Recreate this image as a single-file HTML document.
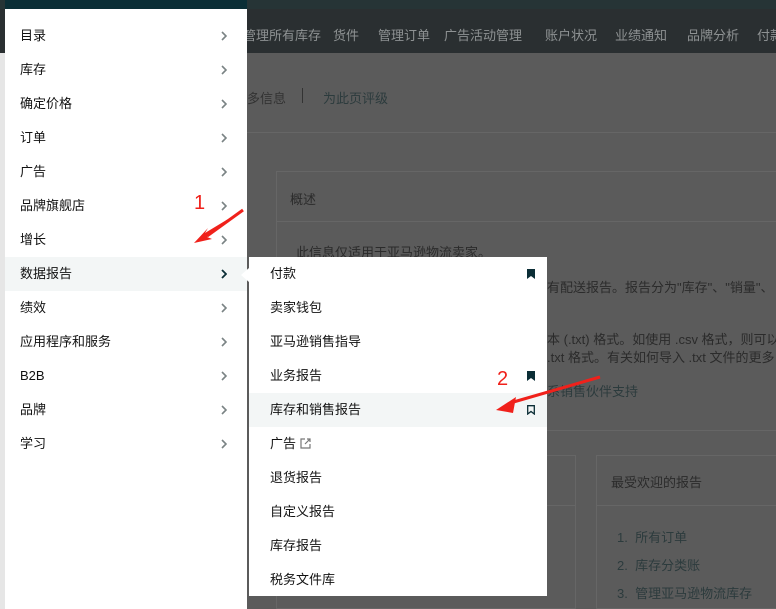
<!DOCTYPE html>
<html><head><meta charset="utf-8"><style>
*{margin:0;padding:0;box-sizing:border-box}
body{width:776px;height:609px;overflow:hidden;background:#5b5b5b;font-family:"Liberation Sans","Noto Sans CJK SC",sans-serif;font-size:13px;position:relative}
.abs{position:absolute}
.nav{left:0;top:0;width:776px;height:53px;background:#2a2f31;border-top:9px solid #263436}
.nav span{position:absolute;top:16px;color:#8e9293;font-size:13px;white-space:nowrap}
.bg{color:#2b2b2b}
.menu{left:5px;top:9px;width:242px;height:600px;background:#fff}
.row{position:absolute;left:0;width:100%;height:34px;line-height:34px;padding-left:15px;color:#111;font-size:13px}
.chev{position:absolute;right:20px;top:12px;width:6px;height:10px}
.sub{left:249px;top:257px;width:298px;height:339px;background:#fff}
.sub .row{padding-left:21px}
.bm{position:absolute;right:12px;top:12px;width:8px;height:10px}
</style></head><body>
<div class="abs" style="left:0;top:0;width:5px;height:609px;background:#e6e6e6"></div>
<div class="abs nav">
<span style="left:243px">管理所有库存</span><span style="left:333px">货件</span><span style="left:378px">管理订单</span><span style="left:444px">广告活动管理</span><span style="left:545px">账户状况</span><span style="left:615px">业绩通知</span><span style="left:687px">品牌分析</span><span style="left:757px">付款</span>
</div>
<div class="abs bg" style="left:247px;top:88px;color:#333">多信息</div>
<div class="abs" style="left:302px;top:88px;width:1px;height:15px;background:#333"></div>
<div class="abs" style="left:323px;top:88px;color:#2c3b3d">为此页评级</div>
<div class="abs" style="left:247px;top:132px;width:529px;height:1px;background:#666"></div>
<div class="abs" style="left:276px;top:171px;width:500px;height:260px;border:1px solid #666;border-right:none"></div>
<div class="abs" style="left:276px;top:221px;width:500px;height:1px;background:#666"></div>
<div class="abs bg" style="left:290px;top:189px">概述</div>
<div class="abs bg" style="left:296px;top:242px">此信息仅适用于亚马逊物流卖家。</div>
<div class="abs bg" style="left:547px;top:277px;white-space:nowrap">有配送报告。报告分为"库存"、"销量"、</div>
<div class="abs bg" style="left:547px;top:329px;white-space:nowrap">本 (.txt) 格式。如使用 .csv 格式，则可以</div>
<div class="abs bg" style="left:547px;top:347px;white-space:nowrap">.txt 格式。有关如何导入 .txt 文件的更多</div>
<div class="abs" style="left:547px;top:381px;color:#2c3b3d;white-space:nowrap">系销售伙伴支持</div>
<div class="abs" style="left:276px;top:455px;width:300px;height:154px;border:1px solid #666"></div>
<div class="abs" style="left:596px;top:455px;width:180px;height:154px;border:1px solid #666;border-right:none"></div>
<div class="abs" style="left:596px;top:505px;width:180px;height:1px;background:#666"></div>
<div class="abs" style="left:276px;top:505px;width:300px;height:1px;background:#666"></div>
<div class="abs bg" style="left:611px;top:472px">最受欢迎的报告</div>
<div class="abs" style="left:617px;top:527px;color:#2c3b3d">1.&nbsp; 所有订单</div>
<div class="abs" style="left:617px;top:555px;color:#2c3b3d">2.&nbsp; 库存分类账</div>
<div class="abs" style="left:617px;top:583px;color:#2c3b3d">3.&nbsp; 管理亚马逊物流库存</div>

<div class="abs" style="left:5px;top:0;width:242px;height:9px;background:#0b2e36"></div>
<div class="abs menu">
<div class="row" style="top:10px">目录<svg class="chev" viewBox="0 0 6 10"><path d="M1 1L5 5 1 9" fill="none" stroke="#7a8384" stroke-width="1.6"/></svg></div>
<div class="row" style="top:44px">库存<svg class="chev" viewBox="0 0 6 10"><path d="M1 1L5 5 1 9" fill="none" stroke="#7a8384" stroke-width="1.6"/></svg></div>
<div class="row" style="top:78px">确定价格<svg class="chev" viewBox="0 0 6 10"><path d="M1 1L5 5 1 9" fill="none" stroke="#7a8384" stroke-width="1.6"/></svg></div>
<div class="row" style="top:112px">订单<svg class="chev" viewBox="0 0 6 10"><path d="M1 1L5 5 1 9" fill="none" stroke="#7a8384" stroke-width="1.6"/></svg></div>
<div class="row" style="top:146px">广告<svg class="chev" viewBox="0 0 6 10"><path d="M1 1L5 5 1 9" fill="none" stroke="#7a8384" stroke-width="1.6"/></svg></div>
<div class="row" style="top:180px">品牌旗舰店<svg class="chev" viewBox="0 0 6 10"><path d="M1 1L5 5 1 9" fill="none" stroke="#7a8384" stroke-width="1.6"/></svg></div>
<div class="row" style="top:214px">增长<svg class="chev" viewBox="0 0 6 10"><path d="M1 1L5 5 1 9" fill="none" stroke="#7a8384" stroke-width="1.6"/></svg></div>
<div class="row" style="top:248px;background:#f3f6f6">数据报告<svg class="chev" viewBox="0 0 6 10"><path d="M1 1L5 5 1 9" fill="none" stroke="#0b2e36" stroke-width="1.8"/></svg></div>
<div class="row" style="top:282px">绩效<svg class="chev" viewBox="0 0 6 10"><path d="M1 1L5 5 1 9" fill="none" stroke="#7a8384" stroke-width="1.6"/></svg></div>
<div class="row" style="top:316px">应用程序和服务<svg class="chev" viewBox="0 0 6 10"><path d="M1 1L5 5 1 9" fill="none" stroke="#7a8384" stroke-width="1.6"/></svg></div>
<div class="row" style="top:350px">B2B<svg class="chev" viewBox="0 0 6 10"><path d="M1 1L5 5 1 9" fill="none" stroke="#7a8384" stroke-width="1.6"/></svg></div>
<div class="row" style="top:384px">品牌<svg class="chev" viewBox="0 0 6 10"><path d="M1 1L5 5 1 9" fill="none" stroke="#7a8384" stroke-width="1.6"/></svg></div>
<div class="row" style="top:418px">学习<svg class="chev" viewBox="0 0 6 10"><path d="M1 1L5 5 1 9" fill="none" stroke="#7a8384" stroke-width="1.6"/></svg></div>
</div>
<div class="abs" style="left:241px;top:268px;width:0;height:0;border-top:7px solid transparent;border-bottom:7px solid transparent;border-right:8px solid #fff"></div>
<div class="abs sub">
<div class="row" style="top:0">付款<svg class="bm" viewBox="0 0 8 10"><path d="M0 0H8V10L4 7 0 10Z" fill="#0b2e36"/></svg></div>
<div class="row" style="top:34px">卖家钱包</div>
<div class="row" style="top:68px">亚马逊销售指导</div>
<div class="row" style="top:102px">业务报告<svg class="bm" viewBox="0 0 8 10"><path d="M0 0H8V10L4 7 0 10Z" fill="#0b2e36"/></svg></div>
<div class="row" style="top:136px;background:#f3f6f6">库存和销售报告<svg class="bm" viewBox="0 0 8 10"><path d="M.7 .7H7.3V9L4 6.5 .7 9Z" fill="none" stroke="#0b2e36" stroke-width="1.3"/></svg></div>
<div class="row" style="top:170px">广告 <svg width="11" height="11" viewBox="0 0 11 11" style="vertical-align:-1px"><path d="M5 1H1V10H10V6M7 1H10V4M10 1L5 6" fill="none" stroke="#777" stroke-width="1.2"/></svg></div>
<div class="row" style="top:204px">退货报告</div>
<div class="row" style="top:238px">自定义报告</div>
<div class="row" style="top:272px">库存报告</div>
<div class="row" style="top:306px">税务文件库</div>
</div>
<div class="abs" style="left:194px;top:192px;color:#f0211b;font-size:20px">1</div>
<div class="abs" style="left:497px;top:368px;color:#f0211b;font-size:20px">2</div>
<svg class="abs" style="left:0;top:0" width="776" height="609">
<path d="M243 210L205 233 208 228 194 243 212 239 207 237Z" fill="#f0211b"/>
<path d="M243 210L207 236" stroke="#f0211b" stroke-width="3"/>
<path d="M600 377L510 403" stroke="#f0211b" stroke-width="3"/>
<path d="M496 410L516 397 513 413Z" fill="#f0211b"/>
</svg>
</body></html>
